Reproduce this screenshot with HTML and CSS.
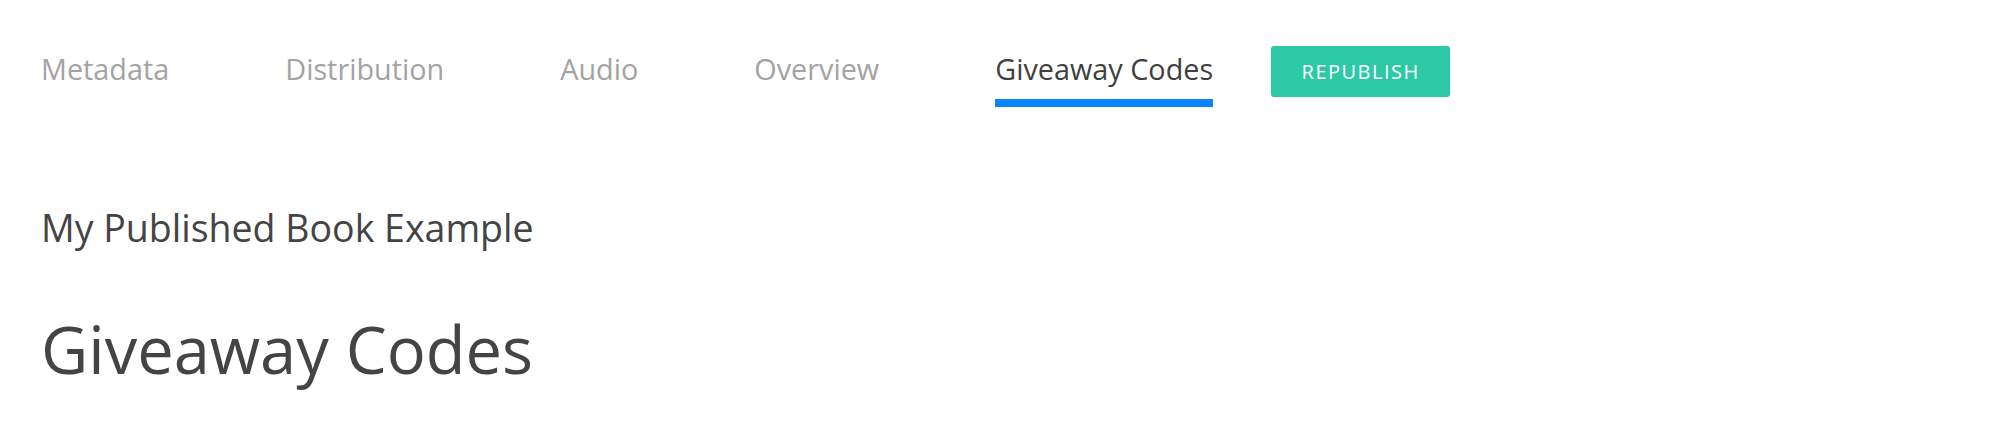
FILE: index.html
```html
<!DOCTYPE html>
<html>
<head>
<meta charset="utf-8">
<link rel="stylesheet" href="styles.css">
</head>
<body>
<div class="page">
  <nav class="tabs">
    <a class="tab">Metadata</a>
    <a class="tab">Distribution</a>
    <a class="tab">Audio</a>
    <a class="tab">Overview</a>
    <a class="tab active">Giveaway Codes</a>
    <button class="republish">REPUBLISH</button>
  </nav>
  <div class="book-title">My Published Book Example</div>
  <h1 class="page-title">Giveaway Codes</h1>
</div>
</body>
</html>
```

FILE: styles.css
```css
html, body {
  margin: 0;
  padding: 0;
  background: #ffffff;
}
body {
  font-family: "Open Sans", "Liberation Sans", sans-serif;
  color: #444446;
}
.page {
  padding: 46px 0 0 41px;
}
.tabs {
  display: flex;
  align-items: flex-start;
  gap: 116px;
}
.tab {
  font-size: 28.8px;
  line-height: 38px;
  padding-top: 4px;
  padding-bottom: 11px;
  border-bottom: 8px solid transparent;
  color: #a3a3a3;
  white-space: nowrap;
}
.tab.active {
  color: #3f3f41;
  border-bottom-color: #0a84ff;
}
.republish {
  margin-left: -58px;
  width: 179px;
  height: 51px;
  border: none;
  border-radius: 3px;
  background: #2dc9a7;
  color: #ffffff;
  font-family: "Open Sans", "Liberation Sans", sans-serif;
  font-size: 20px;
  letter-spacing: 1.5px;
  padding: 0;
}
.book-title {
  margin-top: 96px;
  font-size: 37.5px;
  line-height: 50px;
}
.page-title {
  margin: 52px 0 0 0;
  font-size: 65px;
  font-weight: 400;
  line-height: 88px;
}
```
